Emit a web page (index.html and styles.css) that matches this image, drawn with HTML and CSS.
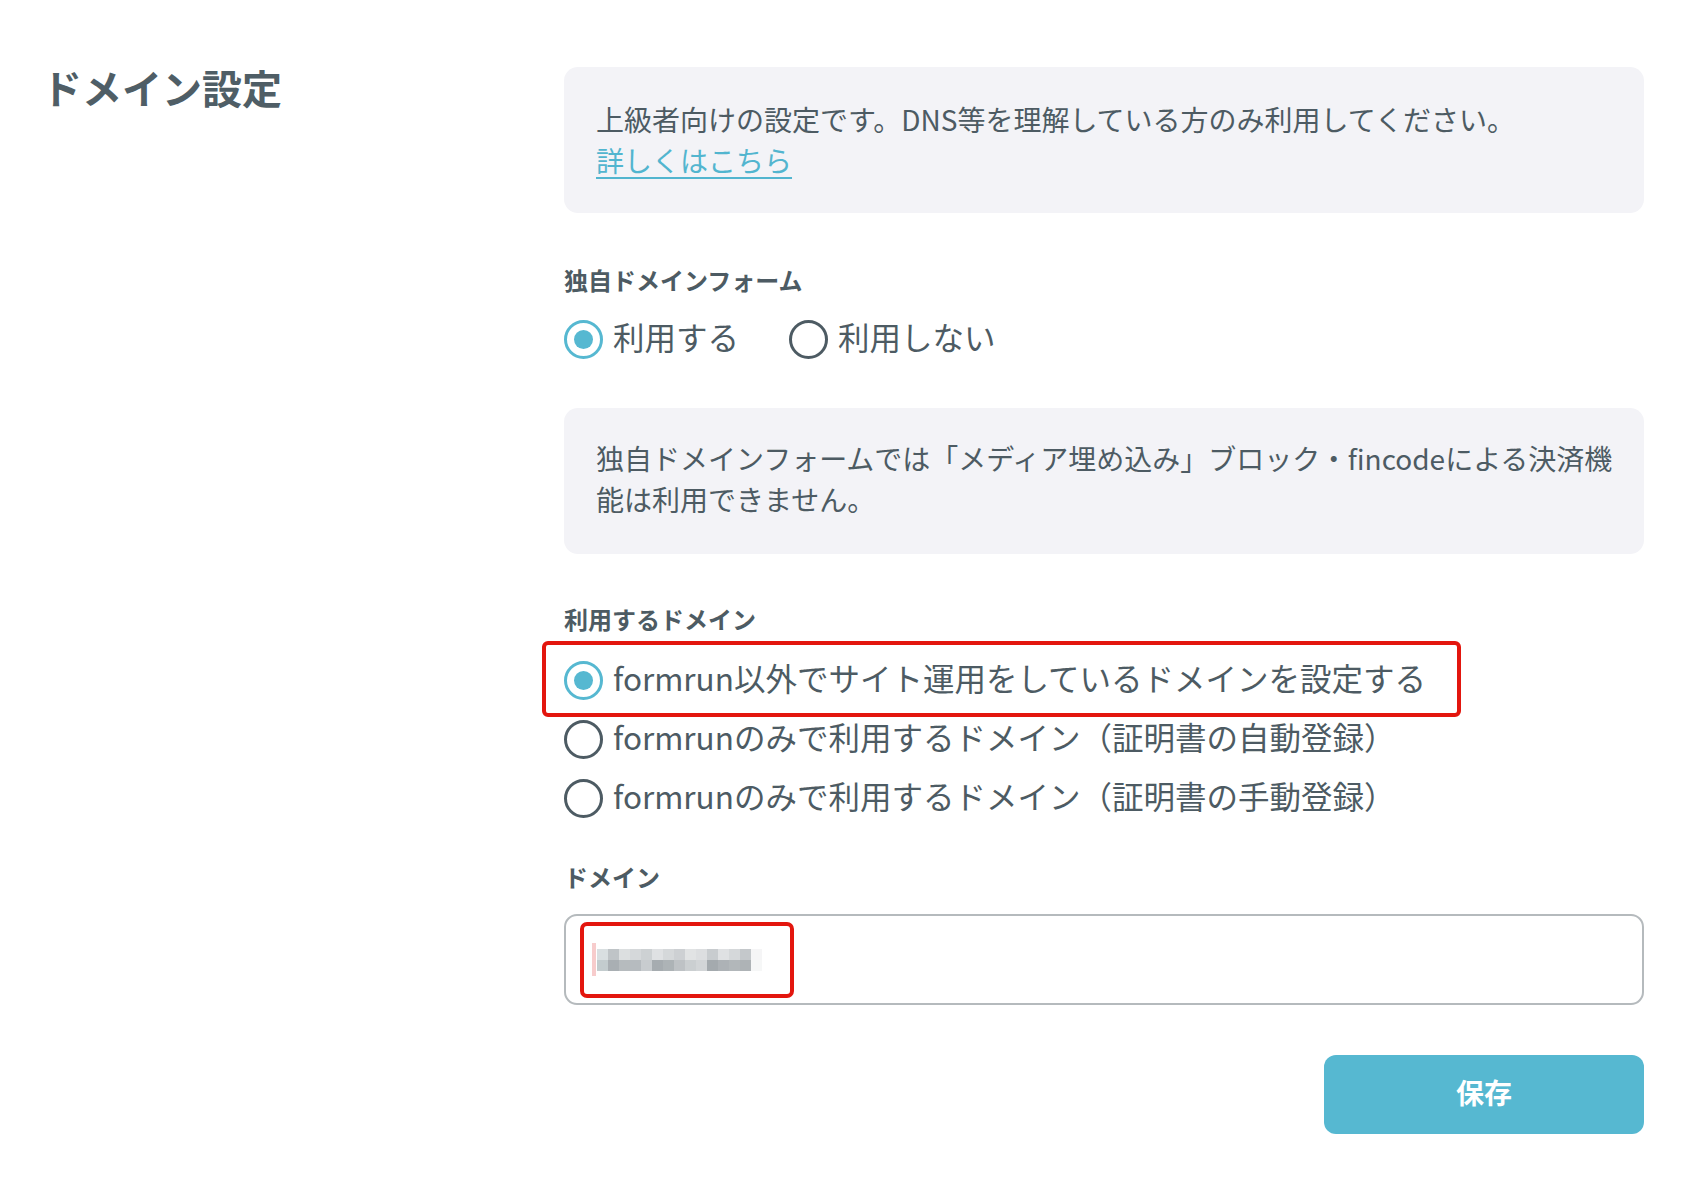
FILE: index.html
```html
<!DOCTYPE html>
<html lang="ja">
<head>
<meta charset="utf-8">
<title>ドメイン設定</title>
<link rel="stylesheet" href="styles.css">
</head>
<body>
<div class="page">
  <h1 class="page-title">ドメイン設定</h1>
  <div class="content">
    <div class="notice notice-first">
      <p class="notice-text">上級者向けの設定です。DNS等を理解している方のみ利用してください。</p>
      <a href="#" class="notice-link">詳しくはこちら</a>
    </div>

    <section class="field field-custom">
      <div class="field-label">独自ドメインフォーム</div>
      <div class="radio-inline">
        <label class="radio"><span class="radio-mark is-checked"></span><span class="radio-text">利用する</span></label>
        <label class="radio"><span class="radio-mark"></span><span class="radio-text">利用しない</span></label>
      </div>
    </section>

    <div class="notice notice-second">
      <p class="notice-text">独自ドメインフォームでは「メディア埋め込み」ブロック・fincodeによる決済機能は利用できません。</p>
    </div>

    <section class="field field-domain-type">
      <div class="field-label">利用するドメイン</div>
      <div class="radio-list">
        <label class="radio radio-annotated"><span class="radio-mark is-checked"></span><span class="radio-text">formrun以外でサイト運用をしているドメインを設定する</span><span class="annotation annotation-option"></span></label>
        <label class="radio"><span class="radio-mark"></span><span class="radio-text">formrunのみで利用するドメイン（証明書の自動登録）</span></label>
        <label class="radio"><span class="radio-mark"></span><span class="radio-text">formrunのみで利用するドメイン（証明書の手動登録）</span></label>
      </div>
    </section>

    <section class="field field-domain">
      <div class="field-label">ドメイン</div>
      <div class="text-input">
        <span class="caret"></span>
        <span class="blurred"></span>
        <span class="annotation annotation-input"></span>
      </div>
    </section>

    <div class="actions">
      <button class="btn-save" type="button">保存</button>
    </div>
  </div>
</div>
</body>
</html>
```

FILE: styles.css
```css
html, body {
  margin: 0;
  padding: 0;
  background: #ffffff;
}

body {
  font-family: "Noto Sans CJK JP", "Noto Sans", sans-serif;
  color: #4d5b63;
}

.page {
  display: grid;
  grid-template-columns: 522px 1080px;
  padding: 64px 0 0 42px;
}

.page-title {
  margin: 0;
  font-size: 40px;
  line-height: 46px;
  font-weight: 700;
  color: #4f5e66;
}

.content {
  display: flex;
  flex-direction: column;
}

.notice {
  background: #f3f3f7;
  border-radius: 14px;
  padding: 32px 22px 32px 32px;
  font-size: 28px;
  line-height: 41px;
}

.notice-first {
  margin-top: 3px;
}

.notice-text {
  margin: 0;
}

.notice-link {
  color: #52b5cf;
  text-decoration: underline;
  text-decoration-thickness: 2px;
  text-underline-offset: 5px;
}

.field-label {
  font-size: 24px;
  line-height: 34px;
  font-weight: 700;
  color: #4d5b63;
}

.field-custom {
  margin-top: 50px;
}

.radio-inline {
  display: flex;
  gap: 50px;
  margin-top: 20px;
}

.radio {
  position: relative;
  display: flex;
  align-items: center;
  gap: 10px;
  height: 44px;
  font-size: 31.5px;
  line-height: 44px;
  color: #4d5b63;
}

.radio-text {
  margin-bottom: 6px;
}

.radio-mark {
  box-sizing: border-box;
  width: 39px;
  height: 39px;
  flex: none;
  border-radius: 50%;
  border: 3.5px solid #4d5b63;
  display: flex;
  align-items: center;
  justify-content: center;
}

.radio-mark.is-checked {
  border-color: #56b8d1;
}

.radio-mark.is-checked::after {
  content: "";
  width: 19px;
  height: 19px;
  border-radius: 50%;
  background: #56b8d1;
}

.notice-second {
  margin-top: 47px;
  padding-top: 30px;
  padding-bottom: 34px;
}

.field-domain-type {
  margin-top: 48px;
}

.radio-list {
  display: flex;
  flex-direction: column;
  gap: 15px;
  margin-top: 22px;
}

.annotation {
  position: absolute;
  box-sizing: border-box;
  border: 4.5px solid #e3160e;
  border-radius: 6px;
  pointer-events: none;
}

.annotation-option {
  left: -22px;
  top: -17px;
  width: 919px;
  height: 76px;
}

.field-domain {
  margin-top: 40px;
}

.text-input {
  position: relative;
  box-sizing: border-box;
  margin-top: 20px;
  height: 91px;
  border: 2px solid #b5babd;
  border-radius: 13px;
  background: #ffffff;
  display: flex;
  align-items: center;
  padding-left: 26px;
}

.caret {
  width: 4px;
  height: 33px;
  background: #f7cccc;
  margin-right: 1px;
}

.blurred {
  width: 165px;
  height: 22px;
  background:
    linear-gradient(to right,
      #d9dfe1 0 11px, #bfc4c7 11px 22px, #dcdfe0 22px 33px, #d5d8da 33px 44px,
      #cdd1d3 44px 55px, #dfe1e3 55px 66px, #d5d8da 66px 77px, #cdd0d3 77px 88px,
      #e1e3e4 88px 99px, #dcdee0 99px 110px, #c8cccf 110px 121px, #dfe1e3 121px 132px,
      #d5d8da 132px 143px, #c4c8cb 143px 154px, #f5f5f6 154px 165px) top / 100% 11px no-repeat,
    linear-gradient(to right,
      #c3ccce 0 11px, #a9afb3 11px 22px, #b6bbbe 22px 33px, #b6bbbf 33px 44px,
      #c8cccf 44px 55px, #a6acb0 55px 66px, #adb3b6 66px 77px, #bec2c5 77px 88px,
      #cbcfd1 88px 99px, #d2d5d7 99px 110px, #a4aaae 110px 121px, #adb2b6 121px 132px,
      #b2b7ba 132px 143px, #aeb3b6 143px 154px, #f6f7f7 154px 165px) bottom / 100% 11px no-repeat;
}

.annotation-input {
  left: 14px;
  top: 6px;
  width: 214px;
  height: 76px;
  border-radius: 7px;
}

.actions {
  display: flex;
  justify-content: flex-end;
  margin-top: 50px;
}

.btn-save {
  width: 320px;
  height: 79px;
  padding: 0 0 5px;
  border: none;
  border-radius: 12px;
  background: #56b8d1;
  color: #ffffff;
  font-family: "Noto Sans CJK JP", "Noto Sans", sans-serif;
  font-size: 28px;
  font-weight: 700;
  cursor: pointer;
}
```
